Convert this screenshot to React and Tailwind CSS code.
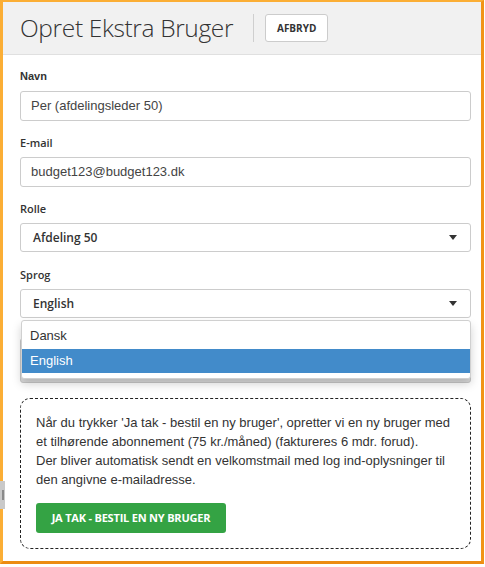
import React from "react";

const OS = { fontFamily: '"Open Sans", "Noto Sans", sans-serif' };
const AR = { fontFamily: '"Liberation Sans", Arial, sans-serif' };

function Caret() {
  return (
    <svg width="8" height="5" viewBox="0 0 8 5" className="shrink-0">
      <path d="M0 0 L8 0 L4 5 Z" fill="#333" />
    </svg>
  );
}

function Label({ children, arial }) {
  return (
    <div
      className={`text-[11px] leading-[15px] text-[#333] mb-[7px] ${arial ? "font-bold" : "font-semibold"}`}
      style={arial ? AR : OS}
    >
      {children}
    </div>
  );
}

function TextInput({ value }) {
  return (
    <div
      className="h-[30px] border border-[#ccc] rounded-[3px] bg-white flex items-center pl-[10px] text-[13px] text-[#444]"
      style={AR}
    >
      {value}
    </div>
  );
}

function Select({ value }) {
  return (
    <div
      className="h-[29px] border border-[#ccc] rounded-[3px] bg-white flex items-center justify-between pl-[12px] pr-[13px] text-[12px] font-semibold text-[#333]"
      style={OS}
    >
      <span>{value}</span>
      <Caret />
    </div>
  );
}

export default function App() {
  return (
    <div className="w-[485px] h-[567px] bg-white relative overflow-hidden">
      <div className="w-[484px] h-[564px] border-l-[3px] border-t-2 border-r-[3px] border-b-[3px] border-l-[#fbae35] border-t-[#fbae35] border-r-[#f19417] border-b-[#ec8c12] flex flex-col">
        {/* Header */}
        <div className="h-[53px] bg-[#f1f1f1] border-b border-[#e0e0e0] flex items-center pl-[17px] shrink-0">
          <div
            className="text-[24.5px] font-light text-[#333] leading-none tracking-[-0.35px]"
            style={OS}
          >
            Opret Ekstra Bruger
          </div>
          <div className="w-px h-[28px] bg-[#cfcfcf] ml-[20px]" />
          <div
            className="ml-[11px] w-[63px] h-[28px] bg-white border border-[#ccc] rounded-[3px] flex items-center justify-center text-[10px] font-bold text-[#333]"
            style={OS}
          >
            AFBRYD
          </div>
        </div>

        {/* Body */}
        <div className="pl-[17px] pr-[10px] pt-[14px]">
          <div className="mb-[14px]">
            <Label arial>Navn</Label>
            <TextInput value="Per (afdelingsleder 50)" />
          </div>
          <div className="mb-[14px]">
            <Label>E-mail</Label>
            <TextInput value="budget123@budget123.dk" />
          </div>
          <div className="mb-[15px]">
            <Label>Rolle</Label>
            <Select value="Afdeling 50" />
          </div>
          <div className="relative">
            <Label>Sprog</Label>
            <Select value="English" />
            {/* underlying element partly covered */}
            <div className="mt-[20px] h-[45px] border border-[#c8c8c8] rounded-[3px] bg-[#dcdcdc]" />
            <div
              className="absolute left-px right-0 top-[53px] bg-white border border-[#d0d0d0] rounded-[3px] shadow-[0_5px_10px_rgba(0,0,0,0.18)] pb-[5px] text-[13px]"
              style={AR}
            >
              <div className="h-[28px] flex items-center pl-[8px] pt-[2px] text-[#333]">Dansk</div>
              <div className="h-[24px] flex items-center pl-[8px] bg-[#428bca] text-white">English</div>
            </div>
          </div>

          {/* Info box */}
          <div className="mt-[15px] border border-dashed border-[#222] rounded-[10px] px-[15px] pt-[14px] pb-[15px]">
            <p className="text-[13px] leading-[19px] text-[#333]" style={AR}>
              Når du trykker 'Ja tak - bestil en ny bruger', opretter vi en ny bruger med et tilhørende abonnement (75 kr./måned) (faktureres 6 mdr. forud).
              <br />
              Der bliver automatisk sendt en velkomstmail med log ind-oplysninger til den angivne e-mailadresse.
            </p>
            <div
              className="mt-[14px] w-[190px] h-[30px] bg-[#34a344] rounded-[3px] flex items-center justify-center text-white text-[11px] font-bold tracking-[-0.2px]"
              style={OS}
            >
              JA TAK - BESTIL EN NY BRUGER
            </div>
          </div>
        </div>
      </div>
      {/* left edge handle */}
      <div className="absolute left-0 top-[481px] w-[5px] h-[28px] bg-[#c9c9c9] flex items-center">
        <div className="ml-[2px] w-[2px] h-[10px] bg-[#8a8a8a]" />
      </div>
    </div>
  );
}
